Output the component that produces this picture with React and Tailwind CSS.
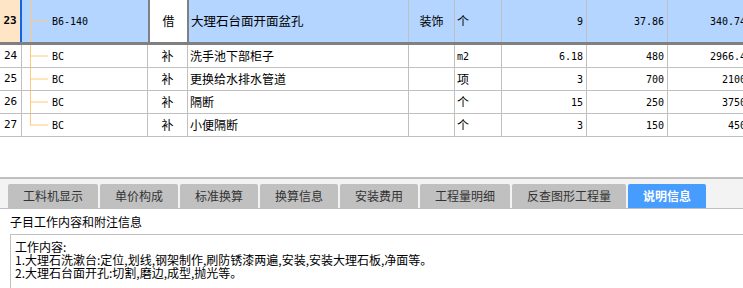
import React from "react";

const rows = [
    {no: "24", code: "BC", tag: "补", name: "洗手池下部柜子", unit: "m2", qty: "6.18", price: "480", total: "2966.4"},
    {no: "25", code: "BC", tag: "补", name: "更换给水排水管道", unit: "项", qty: "3", price: "700", total: "2100"},
    {no: "26", code: "BC", tag: "补", name: "隔断", unit: "个", qty: "15", price: "250", total: "3750"},
    {no: "27", code: "BC", tag: "补", name: "小便隔断", unit: "个", qty: "3", price: "150", total: "450", last: true},
];

const tabs = [
    {label: "工料机显示", w: "w-[90px]"},
    {label: "单价构成", w: "w-[78px]"},
    {label: "标准换算", w: "w-[78px]"},
    {label: "换算信息", w: "w-[78px]"},
    {label: "安装费用", w: "w-[78px]"},
    {label: "工程量明细", w: "w-[90px]"},
    {label: "反查图形工程量", w: "w-[114px]"},
    {label: "说明信息", w: "w-[78px]", active: true},
];

const cjk = "font-['Noto_Sans_CJK_SC',sans-serif]";
const mono = "font-['DejaVu_Sans_Mono','Liberation_Mono',monospace]";

// tree connector: vertical trunk + branch to the code text
const TreeLine = ({end}) => (
    <svg width="30" height="100%" className="shrink-0 h-full">
        <line x1="8.5" y1="0" x2="8.5" y2={end ? "50%" : "100%"} stroke="#ffc87c" strokeWidth="1" />
        <line x1="8" y1="50%" x2="26" y2="50%" stroke="#ffc87c" strokeWidth="1" />
    </svg>
);

const App = () => {
    return (
        <div className={`w-[743px] h-[288px] overflow-hidden bg-white text-black ${cjk}`}>
            {/* table */}
            <div className="w-[760px]">
                <div className="flex h-[45px] border-b-[3px] border-[#808080] bg-[#b3d5ff] text-[12px]">
                    <div className={`w-[22px] bg-[#fee5c6] border-r-2 border-[#1565e0] flex items-center justify-center font-bold ${mono} text-[11px]`}>23</div>
                    <div className="w-[126px] flex items-center">
                        <TreeLine />
                        <span className={`${mono} text-[10px]`}>B6-140</span>
                    </div>
                    <div className="w-[41px] bg-white border-x-2 border-[#808080] flex items-center justify-center">借</div>
                    <div className="w-[220px] border-r border-[#c0c0c0] flex items-center pl-[2px] text-[12.5px]">大理石台面开面盆孔</div>
                    <div className="w-[46px] border-r border-[#c0c0c0] flex items-center justify-center">装饰</div>
                    <div className="w-[47px] border-r border-[#c0c0c0] flex items-center pl-[2px]">个</div>
                    <div className={`w-[85px] border-r border-[#c0c0c0] flex items-center justify-end pr-[3px] ${mono} text-[10px]`}>9</div>
                    <div className={`w-[81px] border-r border-[#c0c0c0] flex items-center justify-end pr-[3px] ${mono} text-[10px]`}>37.86</div>
                    <div className={`w-[81px] flex items-center justify-end pr-[3px] ${mono} text-[10px]`}>340.74</div>
                </div>
                {rows.map((r) => (
                    <div key={r.no} className="flex h-[23px] border-b border-[#c0c0c0] text-[12px]">
                        <div className={`w-[22px] border-r border-[#c0c0c0] flex items-center justify-center ${mono} text-[11px]`}>{r.no}</div>
                        <div className="w-[126px] border-r border-[#c0c0c0] flex items-center">
                            <TreeLine end={r.last} />
                            <span className={`${mono} text-[10px]`}>{r.code}</span>
                        </div>
                        <div className="w-[40px] border-r border-[#c0c0c0] flex items-center justify-center">{r.tag}</div>
                        <div className="w-[221px] border-r border-[#c0c0c0] flex items-center pl-[2px]">{r.name}</div>
                        <div className="w-[46px] border-r border-[#c0c0c0]"></div>
                        <div className={`w-[47px] border-r border-[#c0c0c0] flex items-center pl-[2px] ${r.unit === "m2" ? `${mono} text-[10px]` : ""}`}>{r.unit}</div>
                        <div className={`w-[85px] border-r border-[#c0c0c0] flex items-center justify-end pr-[3px] ${mono} text-[10px]`}>{r.qty}</div>
                        <div className={`w-[81px] border-r border-[#c0c0c0] flex items-center justify-end pr-[3px] ${mono} text-[10px]`}>{r.price}</div>
                        <div className={`w-[81px] flex items-center justify-end pr-[3px] ${mono} text-[10px]`}>{r.total}</div>
                    </div>
                ))}
            </div>

            <div className="h-[40px]"></div>

            {/* tab strip */}
            <div className="border-t-2 border-b border-[#c0c0c0] bg-[#f3f3f3] h-[32px] pt-[5px] pl-[8px] flex gap-[2px]">
                {tabs.map((t) => (
                    <div
                        key={t.label}
                        className={`${t.w} h-[24px] rounded-t-[2px] flex items-center justify-center text-[12px] ${t.active ? "bg-[#479cff] text-white font-bold" : "bg-[#c0c0c0] text-[#333]"}`}
                    >
                        {t.label}
                    </div>
                ))}
            </div>

            <div className="h-[25px] flex items-center pl-[10px] text-[12px]">子目工作内容和附注信息</div>

            <div className="ml-[10px] w-[760px] h-[80px] border border-[#c0c0c0] pt-[5px] pl-[4px] text-[12px] leading-[13px]">
                <div>工作内容:</div>
                <div>1.大理石洗漱台:定位,划线,钢架制作,刷防锈漆两遍,安装,安装大理石板,净面等。</div>
                <div>2.大理石台面开孔:切割,磨边,成型,抛光等。</div>
            </div>
        </div>
    );
};

export default App;
